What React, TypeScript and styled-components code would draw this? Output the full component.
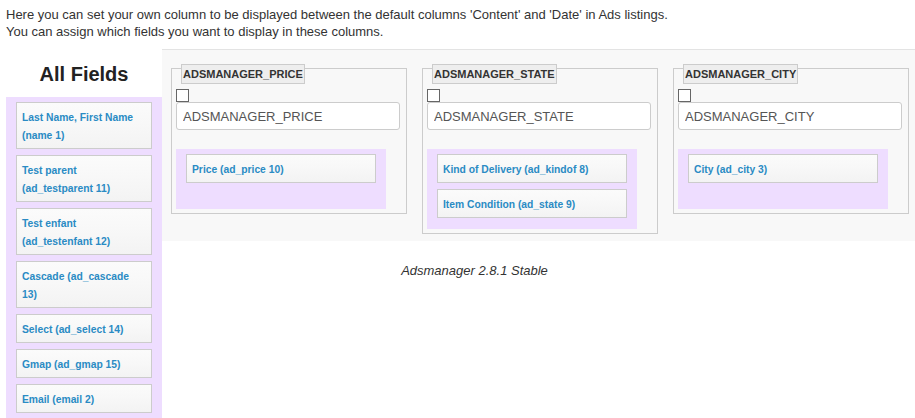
import React from "react";
import styled, { createGlobalStyle } from "styled-components";

const GlobalStyle = createGlobalStyle`
  html, body { margin: 0; padding: 0; background: #ffffff; }
  body { font-family: "Liberation Sans", Arial, sans-serif; color: #333; }
  * { box-sizing: border-box; }
`;

const Page = styled.div`
  width: 915px;
  height: 418px;
  overflow: hidden;
`;

const Intro = styled.p`
  margin: 0;
  padding: 6px 0 0 6px;
  font-size: 13px;
  line-height: 17px;
  color: #333;
`;

const Layout = styled.div`
  display: flex;
  align-items: flex-start;
  margin-top: 9px;
`;

const FieldsColumn = styled.div`
  flex: 0 0 156px;
  margin-left: 6px;
`;

const Heading = styled.h2`
  margin: 13px 0 11px;
  font-size: 20px;
  line-height: 24px;
  font-weight: bold;
  text-align: center;
  color: #222;
`;

const DropZone = styled.div<{ $minH: number }>`
  background: #eeddff;
  padding: 5px 10px 5px 10px;
  min-height: ${(p) => p.$minH}px;
`;

const FieldCard = styled.div`
  border: 1px solid #cccccc;
  background: linear-gradient(to bottom, #fbfbfb 0%, #f8f8f8 45%, #f3f3f3 100%);
  padding: 6px 5px 3px;
  margin-bottom: 6px;
  font-size: 10.3px;
  line-height: 18px;
  font-weight: bold;
  color: #2a8bc4;
`;

const RightColumn = styled.div`
  flex: 1;
  display: flex;
  flex-direction: column;
`;

const ColumnsArea = styled.div`
  display: flex;
  align-items: flex-start;
  gap: 15px;
  background: #f8f8f8;
  border-top: 1px solid #e3e3e3;
  padding: 18px 0 7px 9px;
`;

const Panel = styled.div`
  width: 236px;
  border: 1px solid #cccccc;
  padding: 0 5px 4px 4px;
  display: flex;
  flex-direction: column;
  align-items: flex-start;
`;

const Legend = styled.div`
  margin: -5px 0 0 5px;
  height: 20px;
  padding: 0 1px;
  background: #eeeeee;
  border: 1px solid #cccccc;
  font-size: 11px;
  line-height: 18px;
  font-weight: bold;
  color: #333;
`;

const Check = styled.input.attrs({ type: "checkbox" })`
  appearance: none;
  -webkit-appearance: none;
  width: 13px;
  height: 13px;
  margin: 5px 0 0;
  border: 1px solid #666;
  background: #fff;
  border-radius: 0;
  display: block;
`;

const NameInput = styled.input`
  width: 224px;
  height: 28px;
  margin: 0;
  padding: 0 6px;
  border: 1px solid #cccccc;
  border-radius: 3px;
  background: #fff;
  font-family: "Liberation Sans", Arial, sans-serif;
  font-size: 13px;
  color: #555;
  outline: none;
`;

const PanelZone = styled(DropZone)`
  width: 210px;
  margin-top: 19px;
`;

const Footer = styled.div`
  margin-top: 21px;
  padding-right: 128px;
  text-align: center;
  font-size: 13px;
  line-height: 17px;
  font-style: italic;
  color: #333;
`;

const allFields = [
  ["Last Name, First Name", "(name 1)"],
  ["Test parent", "(ad_testparent 11)"],
  ["Test enfant", "(ad_testenfant 12)"],
  ["Cascade (ad_cascade", "13)"],
  ["Select (ad_select 14)"],
  ["Gmap (ad_gmap 15)"],
  ["Email (email 2)"],
];

const columns = [
  { name: "ADSMANAGER_PRICE", fields: ["Price (ad_price 10)"] },
  {
    name: "ADSMANAGER_STATE",
    fields: ["Kind of Delivery (ad_kindof 8)", "Item Condition (ad_state 9)"],
  },
  { name: "ADSMANAGER_CITY", fields: ["City (ad_city 3)"] },
];

export default function App() {
  return (
    <Page>
      <GlobalStyle />
      <Intro>
        Here you can set your own column to be displayed between the default columns 'Content' and 'Date' in Ads listings.
        <br />
        You can assign which fields you want to display in these columns.
      </Intro>
      <Layout>
        <FieldsColumn>
          <Heading>All Fields</Heading>
          <DropZone $minH={60}>
            {allFields.map((lines, i) => (
              <FieldCard key={i}>
                {lines.map((l, j) => (
                  <React.Fragment key={j}>
                    {j > 0 && <br />}
                    {l}
                  </React.Fragment>
                ))}
              </FieldCard>
            ))}
          </DropZone>
        </FieldsColumn>
        <RightColumn>
          <ColumnsArea>
            {columns.map((c) => (
              <Panel key={c.name}>
                <Legend>{c.name}</Legend>
                <Check />
                <NameInput defaultValue={c.name} />
                <PanelZone $minH={60}>
                  {c.fields.map((f) => (
                    <FieldCard key={f}>{f}</FieldCard>
                  ))}
                </PanelZone>
              </Panel>
            ))}
          </ColumnsArea>
          <Footer>Adsmanager 2.8.1 Stable</Footer>
        </RightColumn>
      </Layout>
    </Page>
  );
}
